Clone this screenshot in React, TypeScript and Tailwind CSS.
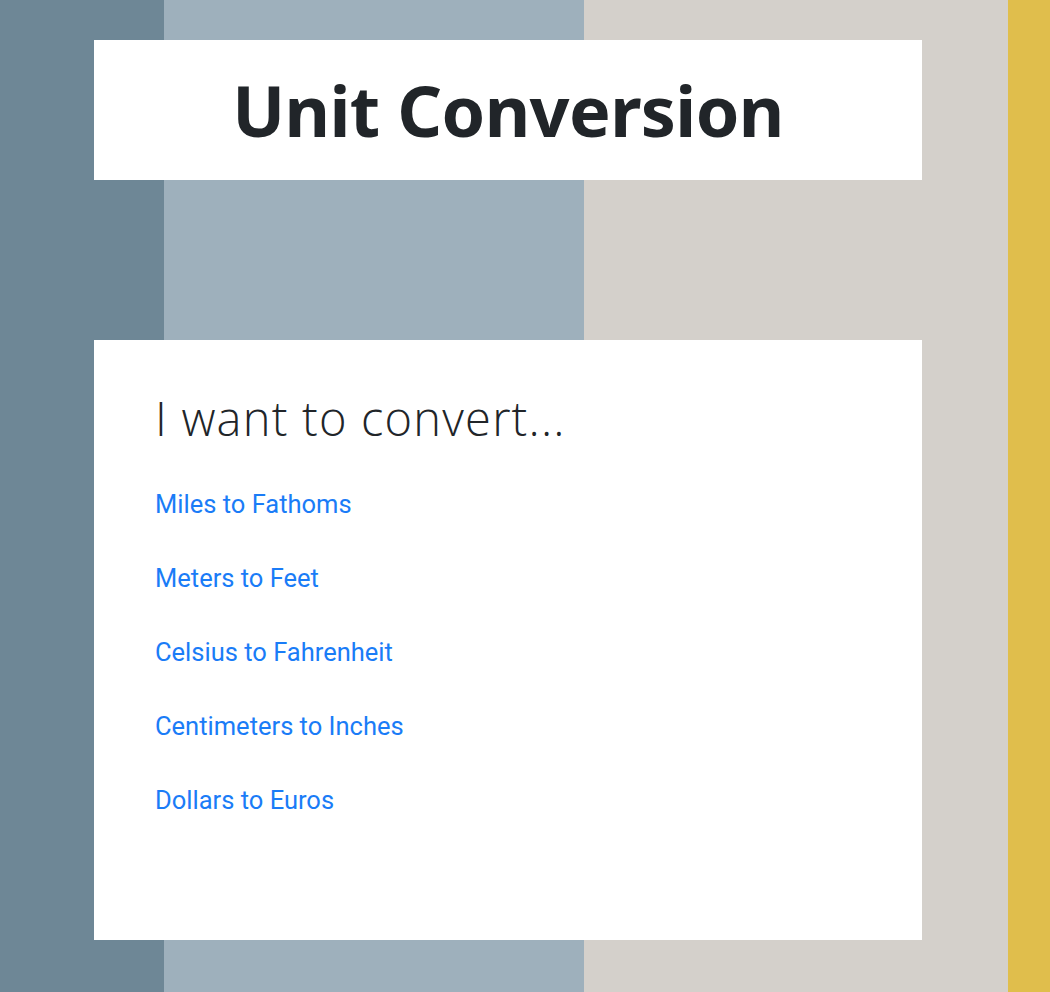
const links = [
  "Miles to Fathoms",
  "Meters to Feet",
  "Celsius to Fahrenheit",
  "Centimeters to Inches",
  "Dollars to Euros",
];

export default function App() {
  return (
    <main className="min-h-[992px] w-[1050px] bg-[linear-gradient(to_right,#6e8796_0px,#6e8796_164px,#9eb0bc_164px,#9eb0bc_584px,#d4d0cb_584px,#d4d0cb_1008px,#e0be4c_1008px)] pt-10">
      <div className="ml-[94px] w-[828px]">
        <header className="flex h-[140px] items-center justify-center bg-white">
          <h1 className="font-['Noto_Sans',sans-serif] text-[70px] font-bold leading-none tracking-[-0.6px] text-[#212529]">
            Unit Conversion
          </h1>
        </header>

        <section className="mt-[160px] h-[600px] bg-white px-[61px] pt-[50px]">
          <h2 className="font-['Open_Sans',sans-serif] text-[47px] font-light leading-[1.2] tracking-[1.2px] text-[#212529]">
            I want to convert...
          </h2>
          <ul className="mt-[43px] flex flex-col gap-[43px]">
            {links.map((l) => (
              <li key={l}>
                <a
                  href="#"
                  className="font-['Roboto',sans-serif] text-[25.5px] leading-[31px] text-[#1a7cf7]"
                >
                  {l}
                </a>
              </li>
            ))}
          </ul>
        </section>
      </div>
    </main>
  );
}
